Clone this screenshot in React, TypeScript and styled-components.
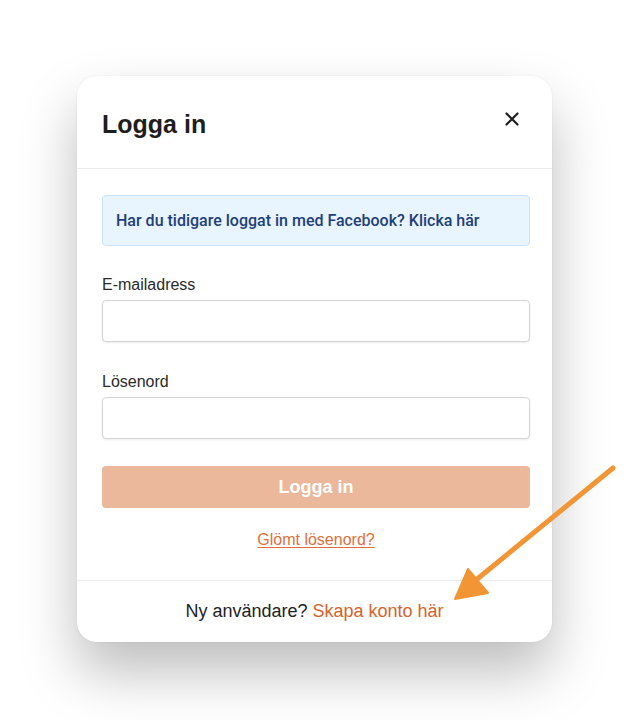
import styled, { createGlobalStyle } from 'styled-components';

const Global = createGlobalStyle`
  html, body {
    margin: 0;
    padding: 0;
    background: #ffffff;
    font-family: "Liberation Sans", Arial, sans-serif;
    color: #222;
  }
  * { box-sizing: border-box; }
`;

const Page = styled.main`
  position: relative;
  width: 629px;
  height: 720px;
  padding: 76px 0 0 77px;
`;

const Modal = styled.section`
  width: 475px;
  height: 566px;
  background: #fff;
  border-radius: 20px;
  box-shadow: 0 30px 55px rgba(0, 0, 0, 0.26), 0 0 2px rgba(0, 0, 0, 0.08);
  display: flex;
  flex-direction: column;
  overflow: hidden;
`;

const Header = styled.header`
  height: 93px;
  display: flex;
  align-items: center;
  justify-content: space-between;
  padding: 4px 32px 0 25px;
  border-bottom: 1px solid #ececec;
`;

const Title = styled.h1`
  margin: 0;
  font-size: 25px;
  font-weight: bold;
  color: #1e1e1e;
`;

const Close = styled.button`
  border: 0;
  background: none;
  padding: 0;
  margin-top: -10px;
  width: 16px;
  height: 16px;
  display: flex;
  cursor: pointer;
`;

const Body = styled.div`
  flex: 1;
  padding: 26px 22px 0 25px;
  display: flex;
  flex-direction: column;
`;

const Alert = styled.div`
  height: 51px;
  background: #e8f4fe;
  border: 1px solid #c9e3f8;
  border-radius: 4px;
  display: flex;
  align-items: center;
  padding: 0 13px;
  font-family: Roboto, "Liberation Sans", sans-serif;
  font-size: 16px;
  font-weight: 500;
  color: #1f3f78;
  margin-bottom: 29px;
`;

const Label = styled.label`
  font-size: 16px;
  color: #2a2a2a;
  margin-bottom: 5px;
  line-height: 20px;
`;

const Input = styled.input<{ $gap: number }>`
  height: 42px;
  border: 1px solid #d4d4d4;
  border-radius: 4px;
  box-shadow: 0 1px 2px rgba(0, 0, 0, 0.08);
  margin-bottom: ${p => p.$gap}px;
  font-size: 16px;
  padding: 0 12px;
`;

const Submit = styled.button`
  height: 42px;
  border: 0;
  border-radius: 4px;
  background: #ebb89b;
  color: #fff;
  font-family: inherit;
  font-size: 18px;
  font-weight: bold;
  margin-bottom: 23px;
`;

const Forgot = styled.a`
  align-self: center;
  color: #e06f3a;
  font-size: 16px;
  text-decoration: underline;
  text-underline-offset: 2px;
`;

const Footer = styled.footer`
  height: 62px;
  border-top: 1px solid #ececec;
  display: flex;
  align-items: center;
  justify-content: center;
  font-size: 18px;
  color: #222;
`;

const FooterLink = styled.a`
  color: #d8622b;
  margin-left: 5px;
  text-decoration: none;
`;

const Arrow = styled.svg`
  position: absolute;
  left: 0;
  top: 0;
  pointer-events: none;
`;

export default function App() {
  return (
    <Page>
      <Global />
      <Modal>
        <Header>
          <Title>Logga in</Title>
          <Close aria-label="Stäng">
            <svg width="16" height="16" viewBox="0 0 16 16">
              <path d="M2.5 2.5 L13.5 13.5 M13.5 2.5 L2.5 13.5" stroke="#1e1e1e" strokeWidth="2.2" strokeLinecap="round" />
            </svg>
          </Close>
        </Header>
        <Body>
          <Alert>Har du tidigare loggat in med Facebook? Klicka här</Alert>
          <Label>E-mailadress</Label>
          <Input type="email" $gap={30} />
          <Label>Lösenord</Label>
          <Input type="password" $gap={27} />
          <Submit>Logga in</Submit>
          <Forgot href="#">Glömt lösenord?</Forgot>
        </Body>
        <Footer>
          Ny användare?<FooterLink href="#">Skapa konto här</FooterLink>
        </Footer>
      </Modal>
      <Arrow width="629" height="720" viewBox="0 0 629 720">
        <line x1="613" y1="468" x2="476" y2="580" stroke="#f29535" strokeWidth="5" strokeLinecap="round" />
        <polygon points="455,599 468,569 488,593" fill="#f29535" stroke="#f29535" strokeWidth="2" strokeLinejoin="round" />
      </Arrow>
    </Page>
  );
}
